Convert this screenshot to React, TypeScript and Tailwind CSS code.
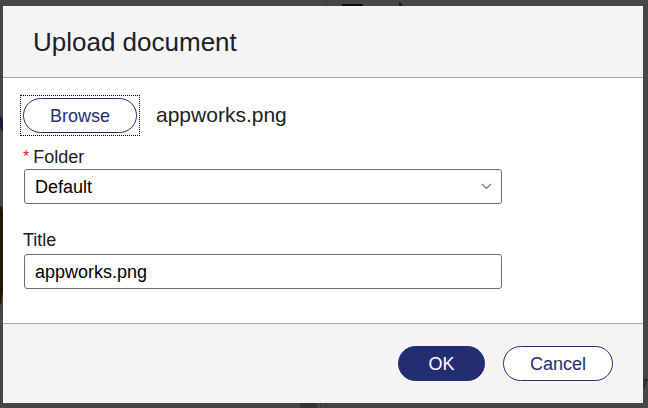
import { useState } from "react";
import type { ReactNode } from "react";

function Backdrop() {
  return (
    <svg
      aria-hidden="true"
      className="pointer-events-none absolute inset-0 -z-10 h-full w-full"
      viewBox="0 0 648 408"
      preserveAspectRatio="none"
    >
      <rect x="325" y="0" width="2" height="408" fill="#3e3e3e" />
      <rect x="342" y="4" width="21" height="4" fill="#0c0c0c" />
      <rect x="399" y="3" width="3" height="4" fill="#1a1a1a" />
      <path d="M0 116L3 119V132L0 128Z" fill="#1b1c3c" />
      <path d="M0 206L2 207L4 220V285L1 304L0 305Z" fill="#211700" />
      <rect x="300" y="402" width="17" height="6" fill="#343434" />
      <rect x="320" y="402" width="2" height="6" fill="#3c3c3c" />
      <path d="M642 377Q645 378 643 382" fill="none" stroke="#14273a" strokeWidth="1" />
      <path d="M644 388L646 379M645 382Q646 379 648 380" fill="none" stroke="#141414" strokeWidth="1" />
    </svg>
  );
}

function PillButton({
  children,
  primary = false,
  width,
  onClick,
}: {
  children: ReactNode;
  primary?: boolean;
  width: string;
  onClick?: () => void;
}) {
  return (
    <button
      type="button"
      onClick={onClick}
      className={`h-[35px] shrink-0 rounded-full border border-[#232e72] text-lg leading-6 ${width} ${
        primary ? "bg-[#232e72] text-white" : "bg-white text-[#232e72]"
      }`}
    >
      {children}
    </button>
  );
}

export default function App() {
  const [title, setTitle] = useState("appworks.png");

  return (
    <div className="relative isolate min-h-screen bg-[#464646] pt-[6px] pr-[5px] pb-[5px] pl-[3px] font-['Liberation_Sans',Arial,sans-serif] text-[#1d2023]">
      <Backdrop />
      <div role="dialog" aria-labelledby="dialog-title" className="bg-white">
        <header className="flex h-[72px] items-center rounded-t-md border-b border-[#a6a6a6] bg-[#f4f4f4] px-[30px]">
          <h1 id="dialog-title" className="text-[26px] leading-8">
            Upload document
          </h1>
        </header>

        <form id="upload-form" className="px-5 pt-[17px] pb-[34px]" onSubmit={(e) => e.preventDefault()}>
          <div className="-ml-[3px] flex items-baseline gap-4">
            <div className="flex border border-dotted border-black p-[2px]">
              <PillButton width="w-[114px]">Browse</PillButton>
            </div>
            <span className="text-[21px] leading-6">appworks.png</span>
          </div>

          <div className="mt-[9px] max-w-[479px]">
            <label htmlFor="folder" className="flex gap-1 text-lg leading-6">
              <span className="text-base text-[#e0242b]">*</span>
              Folder
            </label>
            <div className="relative ml-px">
              <select
                id="folder"
                required
                className="block h-[35px] w-full appearance-none rounded-[3px] border border-[#6e6e6e] bg-white px-[10px] text-lg leading-6 text-black"
              >
                <option>Default</option>
              </select>
              <svg
                aria-hidden="true"
                className="pointer-events-none absolute top-[14px] right-[10px] h-[7px] w-[11px]"
                viewBox="0 0 11 7"
                fill="none"
                stroke="#747474"
                strokeWidth="1.2"
              >
                <path d="M1 1L5.5 5.5L10 1" />
              </svg>
            </div>
          </div>

          <div className="mt-6 max-w-[479px]">
            <label htmlFor="title" className="block pb-[2px] text-lg leading-6">
              Title
            </label>
            <div className="ml-px">
              <input
                id="title"
                type="text"
                value={title}
                onChange={(e) => setTitle(e.target.value)}
                className="block h-[35px] w-full rounded-[3px] border border-[#6e6e6e] bg-white px-[10px] pt-[2px] text-lg leading-6 text-black"
              />
            </div>
          </div>
        </form>

        <footer className="flex justify-end gap-[18px] rounded-b-md border-t border-[#a6a6a6] bg-[#f4f4f4] px-[30px] py-[22px]">
          <PillButton primary width="w-[87px]">
            OK
          </PillButton>
          <PillButton width="w-[110px]">Cancel</PillButton>
        </footer>
      </div>
    </div>
  );
}
